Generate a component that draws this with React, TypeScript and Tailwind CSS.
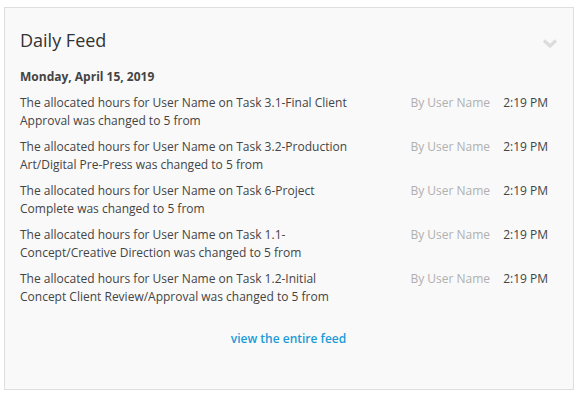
import React from 'react';

const ITEMS = [
  'The allocated hours for User Name on Task 3.1-Final Client Approval was changed to 5 from',
  'The allocated hours for User Name on Task 3.2-Production Art/Digital Pre-Press was changed to 5 from',
  'The allocated hours for User Name on Task 6-Project Complete was changed to 5 from',
  'The allocated hours for User Name on Task 1.1-Concept/Creative Direction was changed to 5 from',
  'The allocated hours for User Name on Task 1.2-Initial Concept Client Review/Approval was changed to 5 from',
];

const App: React.FC = () => {
  return (
    <div className="w-[578px] h-[396px] bg-white pt-[7px] pl-[4px] font-['Open_Sans',sans-serif]">
      <div className="w-[570px] h-[383px] border border-[#dedede] bg-[#f9f9f9] pl-[15px] pr-[24px] pt-[19px] flex flex-col">
        <div className="flex items-center justify-between">
          <h2 className="text-[18px] leading-[26px] text-[#333]">Daily Feed</h2>
          <svg width="16" height="11" viewBox="0 0 16 11" className="mt-[6px] mr-[-9px]">
            <path d="M2 2.5 L8 8 L14 2.5" fill="none" stroke="#dcdcdc" strokeWidth="3.2" />
          </svg>
        </div>
        <div className="mt-[15px] text-[12px] leading-[18px] font-bold text-[#444]">Monday, April 15, 2019</div>
        <div className="mt-[8px] flex flex-col gap-[8px]">
          {ITEMS.map((text, i) => (
            <div key={i} className="flex items-start text-[12px] leading-[18px]">
              <p className="w-[340px] mr-auto text-[#444]">{text}</p>
              <span className="text-[#b0b0b0]">By User Name</span>
              <span className="ml-[13px] mr-[1px] text-[#444]">2:19 PM</span>
            </div>
          ))}
        </div>
        <div className="mt-[19px] pl-[8px] text-center">
          <a className="text-[12px] leading-[18px] font-semibold text-[#1b9bd8] cursor-pointer">view the entire feed</a>
        </div>
      </div>
    </div>
  );
};

export default App;
